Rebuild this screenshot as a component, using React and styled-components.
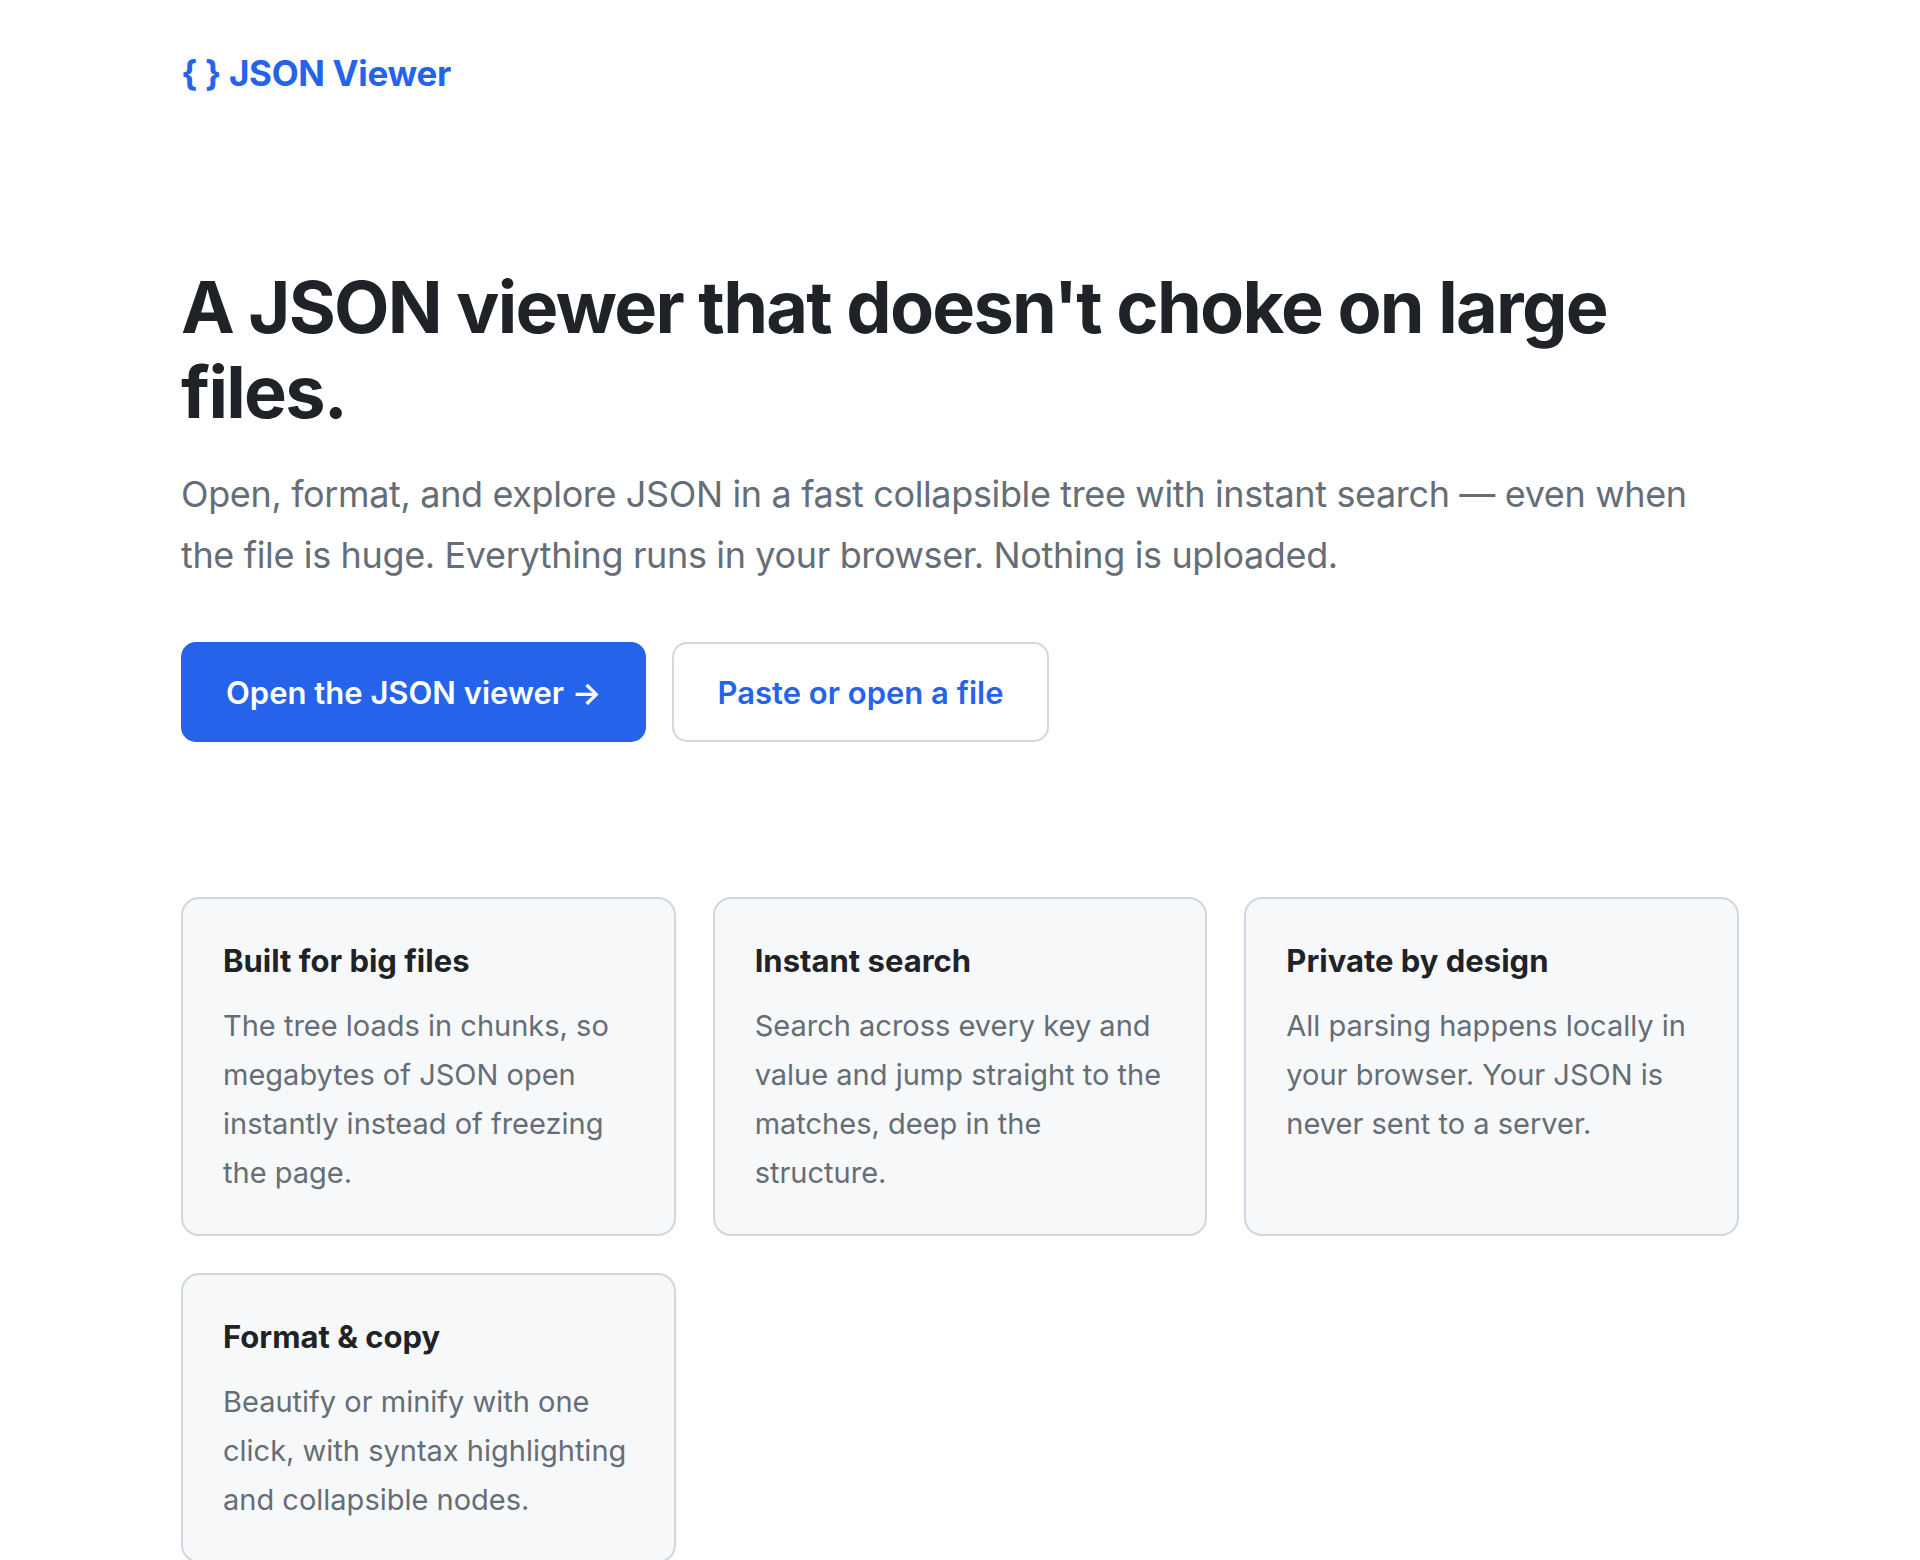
import * as React from 'react';
import styled, { createGlobalStyle } from 'styled-components';

const features = [
    {
        title: 'Built for big files',
        text: 'The tree loads in chunks, so megabytes of JSON open instantly instead of freezing the page.',
    },
    {
        title: 'Instant search',
        text: 'Search across every key and value and jump straight to the matches, deep in the structure.',
    },
    {
        title: 'Private by design',
        text: 'All parsing happens locally in your browser. Your JSON is never sent to a server.',
    },
    {
        title: 'Format & copy',
        text: 'Beautify or minify with one click, with syntax highlighting and collapsible nodes.',
    },
];

export default function App() {
    return (
        <>
            <GlobalStyle />
            <Page>
                <Header>
                    <Logo href="#">{'{ }'} JSON Viewer</Logo>
                </Header>

                <Hero>
                    <Title>A JSON viewer that doesn't choke on large files.</Title>
                    <Lead>
                        Open, format, and explore JSON in a fast collapsible tree with instant search — even when
                        the file is huge. Everything runs in your browser. Nothing is uploaded.
                    </Lead>
                    <Actions>
                        <Button href="#" primary>Open the JSON viewer →</Button>
                        <Button href="#">Paste or open a file</Button>
                    </Actions>
                </Hero>

                <Grid>
                    {features.map((f) => (
                        <Card key={f.title}>
                            <CardTitle>{f.title}</CardTitle>
                            <CardText>{f.text}</CardText>
                        </Card>
                    ))}
                </Grid>
            </Page>
        </>
    );
}

//styling...

const GlobalStyle = createGlobalStyle`
    * {
        box-sizing: border-box;
    }
    body {
        margin: 0;
        background: #ffffff;
        color: #1f2328;
        font-family: Inter, "Noto Sans", "Liberation Sans", sans-serif;
    }
`;

const Page = styled.div`
    max-width: 1558px;
    margin: 0 auto;
    padding-bottom: 60px;
`;

const Header = styled.header`
    display: flex;
    align-items: center;
    padding-top: 53px;
    height: 93px;
`;

const Logo = styled.a`
    color: #2563eb;
    font-size: 35px;
    font-weight: 700;
    line-height: 40px;
    letter-spacing: -0.01em;
    text-decoration: none;
`;

const Hero = styled.section`
    padding-top: 171px;
`;

const Title = styled.h1`
    margin: 0;
    font-size: 72px;
    font-weight: 700;
    line-height: 85px;
    letter-spacing: -0.024em;
    color: #1f2328;
`;

const Lead = styled.p`
    margin: 30px 0 0;
    font-size: 36px;
    line-height: 61px;
    color: #656d76;
    letter-spacing: -0.01em;
`;

const Actions = styled.div`
    display: flex;
    gap: 26px;
    margin-top: 56px;
`;

const Button = styled.a`
    display: inline-flex;
    align-items: center;
    height: 100px;
    padding: 0 43px;
    border-radius: 15px;
    font-size: 31px;
    font-weight: 600;
    text-decoration: none;
    border: 2px solid ${(p) => (p.primary ? '#2563eb' : '#d0d7de')};
    background: ${(p) => (p.primary ? '#2563eb' : '#ffffff')};
    color: ${(p) => (p.primary ? '#ffffff' : '#2563eb')};
`;

const Grid = styled.div`
    display: grid;
    grid-template-columns: repeat(3, 1fr);
    gap: 37px 37px;
    margin-top: 155px;
`;

const Card = styled.div`
    background: #f6f8fa;
    border: 2px solid #d0d7de;
    border-radius: 18px;
    padding: 44px 40px 37px;
`;

const CardTitle = styled.h3`
    margin: 0;
    font-size: 31px;
    font-weight: 700;
    line-height: 36px;
    color: #1f2328;
`;

const CardText = styled.p`
    margin: 22px 0 0;
    font-size: 29px;
    line-height: 49px;
    color: #656d76;
`;
